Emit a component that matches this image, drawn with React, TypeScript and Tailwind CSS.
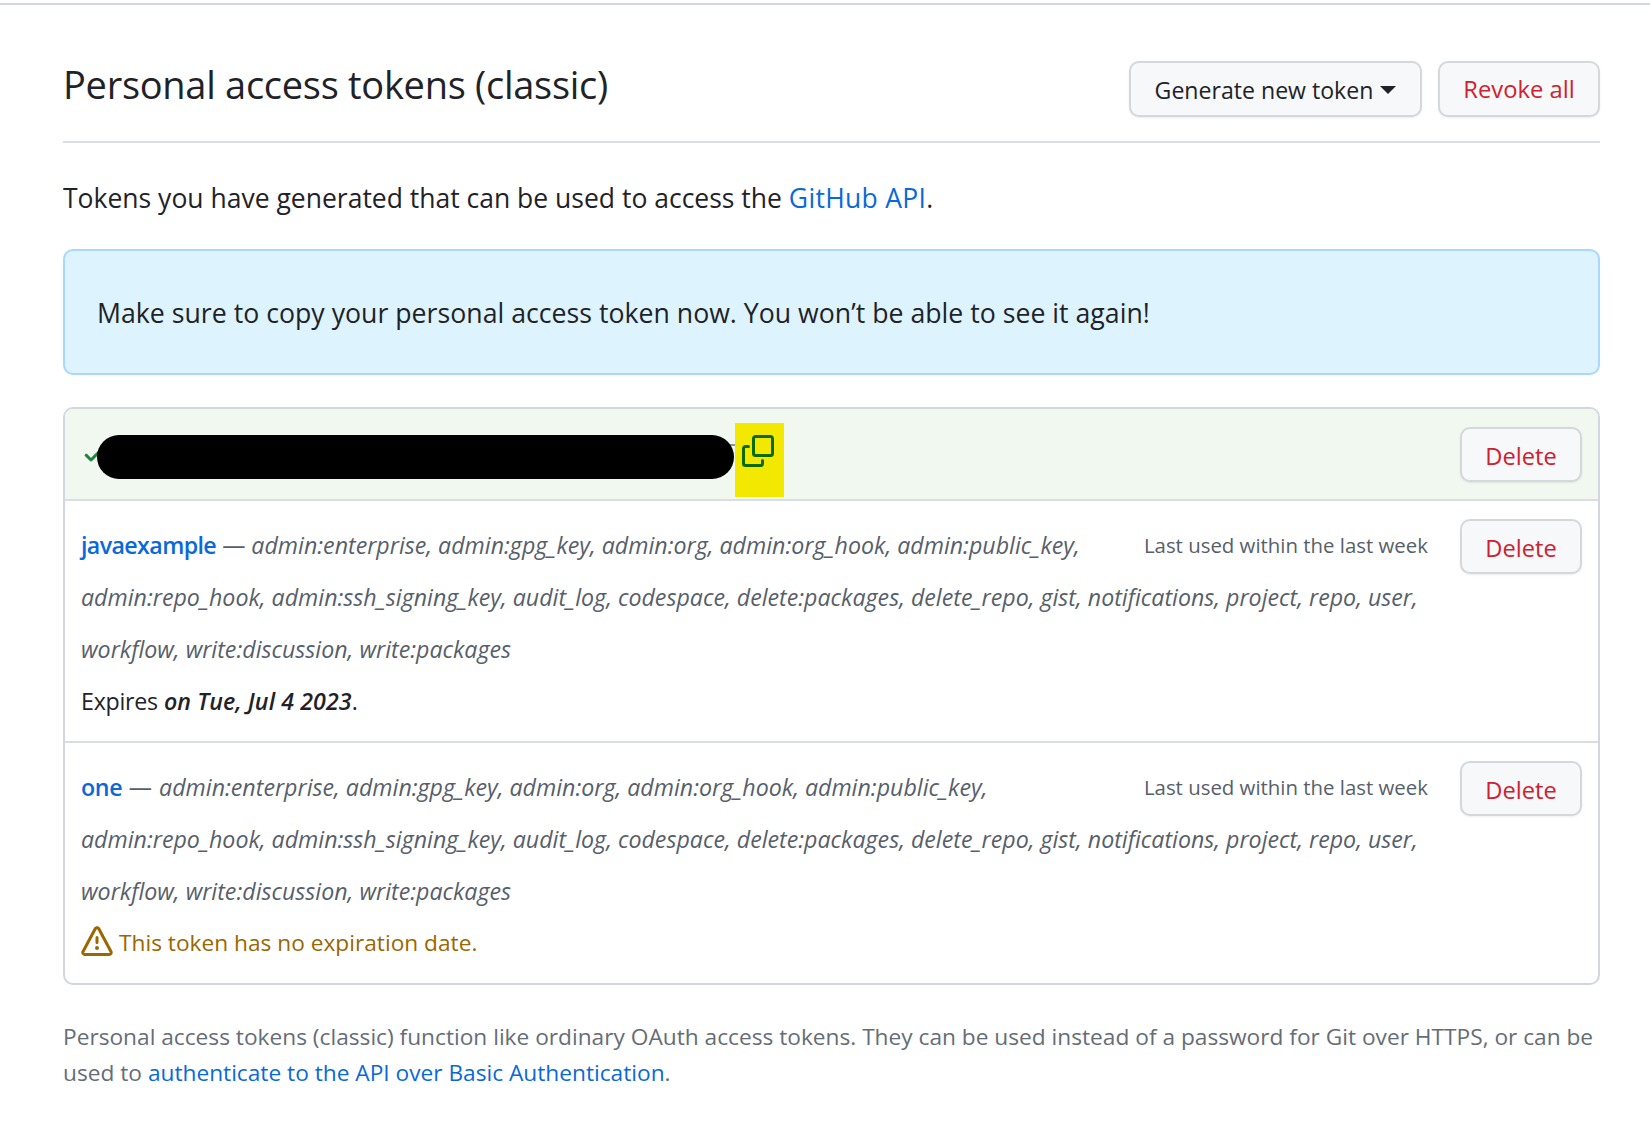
const SCOPES_FIRST = "admin:enterprise, admin:gpg_key, admin:org, admin:org_hook, admin:public_key,";
const SCOPES_SECOND = "admin:repo_hook, admin:ssh_signing_key, audit_log, codespace, delete:packages, delete_repo, gist, notifications, project, repo, user,";
const SCOPES_THIRD = "workflow, write:discussion, write:packages";

function DeleteButton() {
  return (
    <button className="w-[122px] h-[55px] shrink-0 rounded-[10px] border-2 border-[#d5d8da] bg-[#f6f8fa] shadow-[0_1px_2px_rgba(31,35,40,0.08)] pt-[5px] text-[23.7px] font-medium text-[#cf222e]">
      Delete
    </button>
  );
}

function TokenRow({
  name,
  border,
  children,
}: {
  name: string;
  border?: boolean;
  children: React.ReactNode;
}) {
  return (
    <div className={`flex gap-[32px] pl-[16px] pr-[16px] pt-[18px] ${border ? "h-[242px] border-b-2 border-[#d8dee4]" : "h-[240px]"}`}>
      <div className="flex-1 text-[23.2px] leading-[52px]">
        <div className="flex justify-between">
          <div>
            <a className={`font-semibold text-[#0969da] ${border ? "tracking-[-0.6px]" : "tracking-[-0.3px]"}`}>{name}</a>
            <span className={`text-[#57606a] ${border ? "" : "tracking-[0.5px]"}`}> — </span>
            <em className="text-[#57606a]">{SCOPES_FIRST}</em>
          </div>
          <span className="text-[20.4px] text-[#57606a]">Last used within the last week</span>
        </div>
        <div className="italic text-[#57606a] whitespace-nowrap">{SCOPES_SECOND}</div>
        <div className="italic text-[#57606a]">{SCOPES_THIRD}</div>
        {children}
      </div>
      <DeleteButton />
    </div>
  );
}

export default function App() {
  return (
    <div className="min-h-[1126px] bg-white pt-[3px] font-['Open_Sans',sans-serif] text-[#1f2328]">
      <div className="border-t-2 border-[#d0d7de] pl-[63px] pr-[50px]">
        {/* Header */}
        <div className="h-[138px] flex items-center justify-between border-b-2 border-[#d8dee4] pt-[32px]">
          <h1 className="text-[38px] tracking-[-0.28px] font-normal leading-[50px] -mt-[11px]">Personal access tokens (classic)</h1>
          <div className="flex gap-[16px] font-medium">
            <button className="w-[293px] h-[56px] rounded-[10px] border-2 border-[#d5d8da] bg-[#f6f8fa] shadow-[0_1px_2px_rgba(31,35,40,0.08)] flex items-center justify-center gap-[7px] pt-[2px] text-[23.1px]">
              Generate new token
              <span className="w-0 h-0 border-x-[8px] border-x-transparent border-t-[8px] border-t-[#1f2328]" />
            </button>
            <button className="w-[162px] h-[56px] rounded-[10px] border-2 border-[#d5d8da] bg-[#f6f8fa] shadow-[0_1px_2px_rgba(31,35,40,0.08)] pt-[2px] text-[23.8px] text-[#cf222e]">
              Revoke all
            </button>
          </div>
        </div>

        <p className="mt-[35px] text-[26.5px] leading-[40px]">
          Tokens you have generated that can be used to access the <a className="tracking-[0.3px] text-[#0969da]">GitHub API</a>.
        </p>

        {/* Notice */}
        <div className="mt-[31px] h-[126px] rounded-[10px] border-2 border-[#a8d8ff] bg-[#ddf4ff] px-[32px] pt-[2px] flex items-center text-[26.7px]">
          Make sure to copy your personal access token now. You won’t be able to see it again!
        </div>

        {/* Token list */}
        <div className="mt-[32px] rounded-[10px] border-2 border-[#d0d7de]">
          <div className="relative h-[92px] rounded-t-[8px] bg-[#f0f8ef] border-b-2 border-[#d8dee4] flex items-center justify-between pl-[17px] pr-[16px]">
            <svg width="24" height="24" viewBox="0 0 16 16" fill="#1a7f37" stroke="#1a7f37" strokeWidth="0.6">
              <path d="M13.78 4.22a.75.75 0 0 1 0 1.06l-7.25 7.25a.75.75 0 0 1-1.06 0L2.22 9.28a.751.751 0 0 1 1.06-1.06L6 10.94l6.72-6.72a.75.75 0 0 1 1.06 0Z" />
            </svg>
            {/* redaction and highlight painted over the token */}
            <div className="absolute left-[664px] top-[35px] w-[6px] h-[2px] bg-[#8b949e]" />
            <div className="absolute left-[32px] top-[26px] w-[637px] h-[44px] rounded-full bg-black" />
            <div className="absolute left-[670px] top-[14px] w-[49px] h-[74px] bg-[#f2e800]">
              <svg width="32" height="32" viewBox="0 0 16 16" fill="#0b6a00" className="absolute left-[7px] top-[12px]">
                <path d="M0 6.75C0 5.784.784 5 1.75 5h1.5a.75.75 0 0 1 0 1.5h-1.5a.25.25 0 0 0-.25.25v7.5c0 .138.112.25.25.25h7.5a.25.25 0 0 0 .25-.25v-1.5a.75.75 0 0 1 1.5 0v1.5A1.75 1.75 0 0 1 9.25 16h-7.5A1.75 1.75 0 0 1 0 14.25Z" />
                <path d="M5 1.75C5 .784 5.784 0 6.75 0h7.5C15.216 0 16 .784 16 1.75v7.5A1.75 1.75 0 0 1 14.25 11h-7.5A1.75 1.75 0 0 1 5 9.25Zm1.75-.25a.25.25 0 0 0-.25.25v7.5c0 .138.112.25.25.25h7.5a.25.25 0 0 0 .25-.25v-7.5a.25.25 0 0 0-.25-.25Z" />
              </svg>
            </div>
            <DeleteButton />
          </div>

          <TokenRow name="javaexample" border>
            <div>
              <span className="tracking-[-0.25px]">Expires</span> <em className="font-semibold tracking-[0.1px]">on Tue, Jul 4 2023</em>.
            </div>
          </TokenRow>

          <TokenRow name="one">
            <div className="flex items-center gap-[6px] text-[22.7px] text-[#9a6700]">
              <svg width="32" height="32" viewBox="0 0 16 16" fill="#9a6700" className="-mt-[2px]">
                <path d="M6.457 1.047c.659-1.234 2.427-1.234 3.086 0l6.082 11.378A1.75 1.75 0 0 1 14.082 15H1.918a1.75 1.75 0 0 1-1.543-2.575Zm1.763.707a.25.25 0 0 0-.44 0L1.698 13.132a.25.25 0 0 0 .22.368h12.164a.25.25 0 0 0 .22-.368Zm.53 3.996v2.5a.75.75 0 0 1-1.5 0v-2.5a.75.75 0 0 1 1.5 0ZM9 11a1 1 0 1 1-2 0 1 1 0 0 1 2 0Z" />
              </svg>
              This token has no expiration date.
            </div>
          </TokenRow>
        </div>

        <div className="mt-[34px] text-[22.7px] leading-[36px] text-[#656d76]">
          <p className="whitespace-nowrap">Personal access tokens (classic) function like ordinary OAuth access tokens. They can be used instead of a password for Git over HTTPS, or can be</p>
          <p>
            used to <a className="text-[#0969da]">authenticate to the API over Basic Authentication</a>.
          </p>
        </div>
      </div>
    </div>
  );
}
